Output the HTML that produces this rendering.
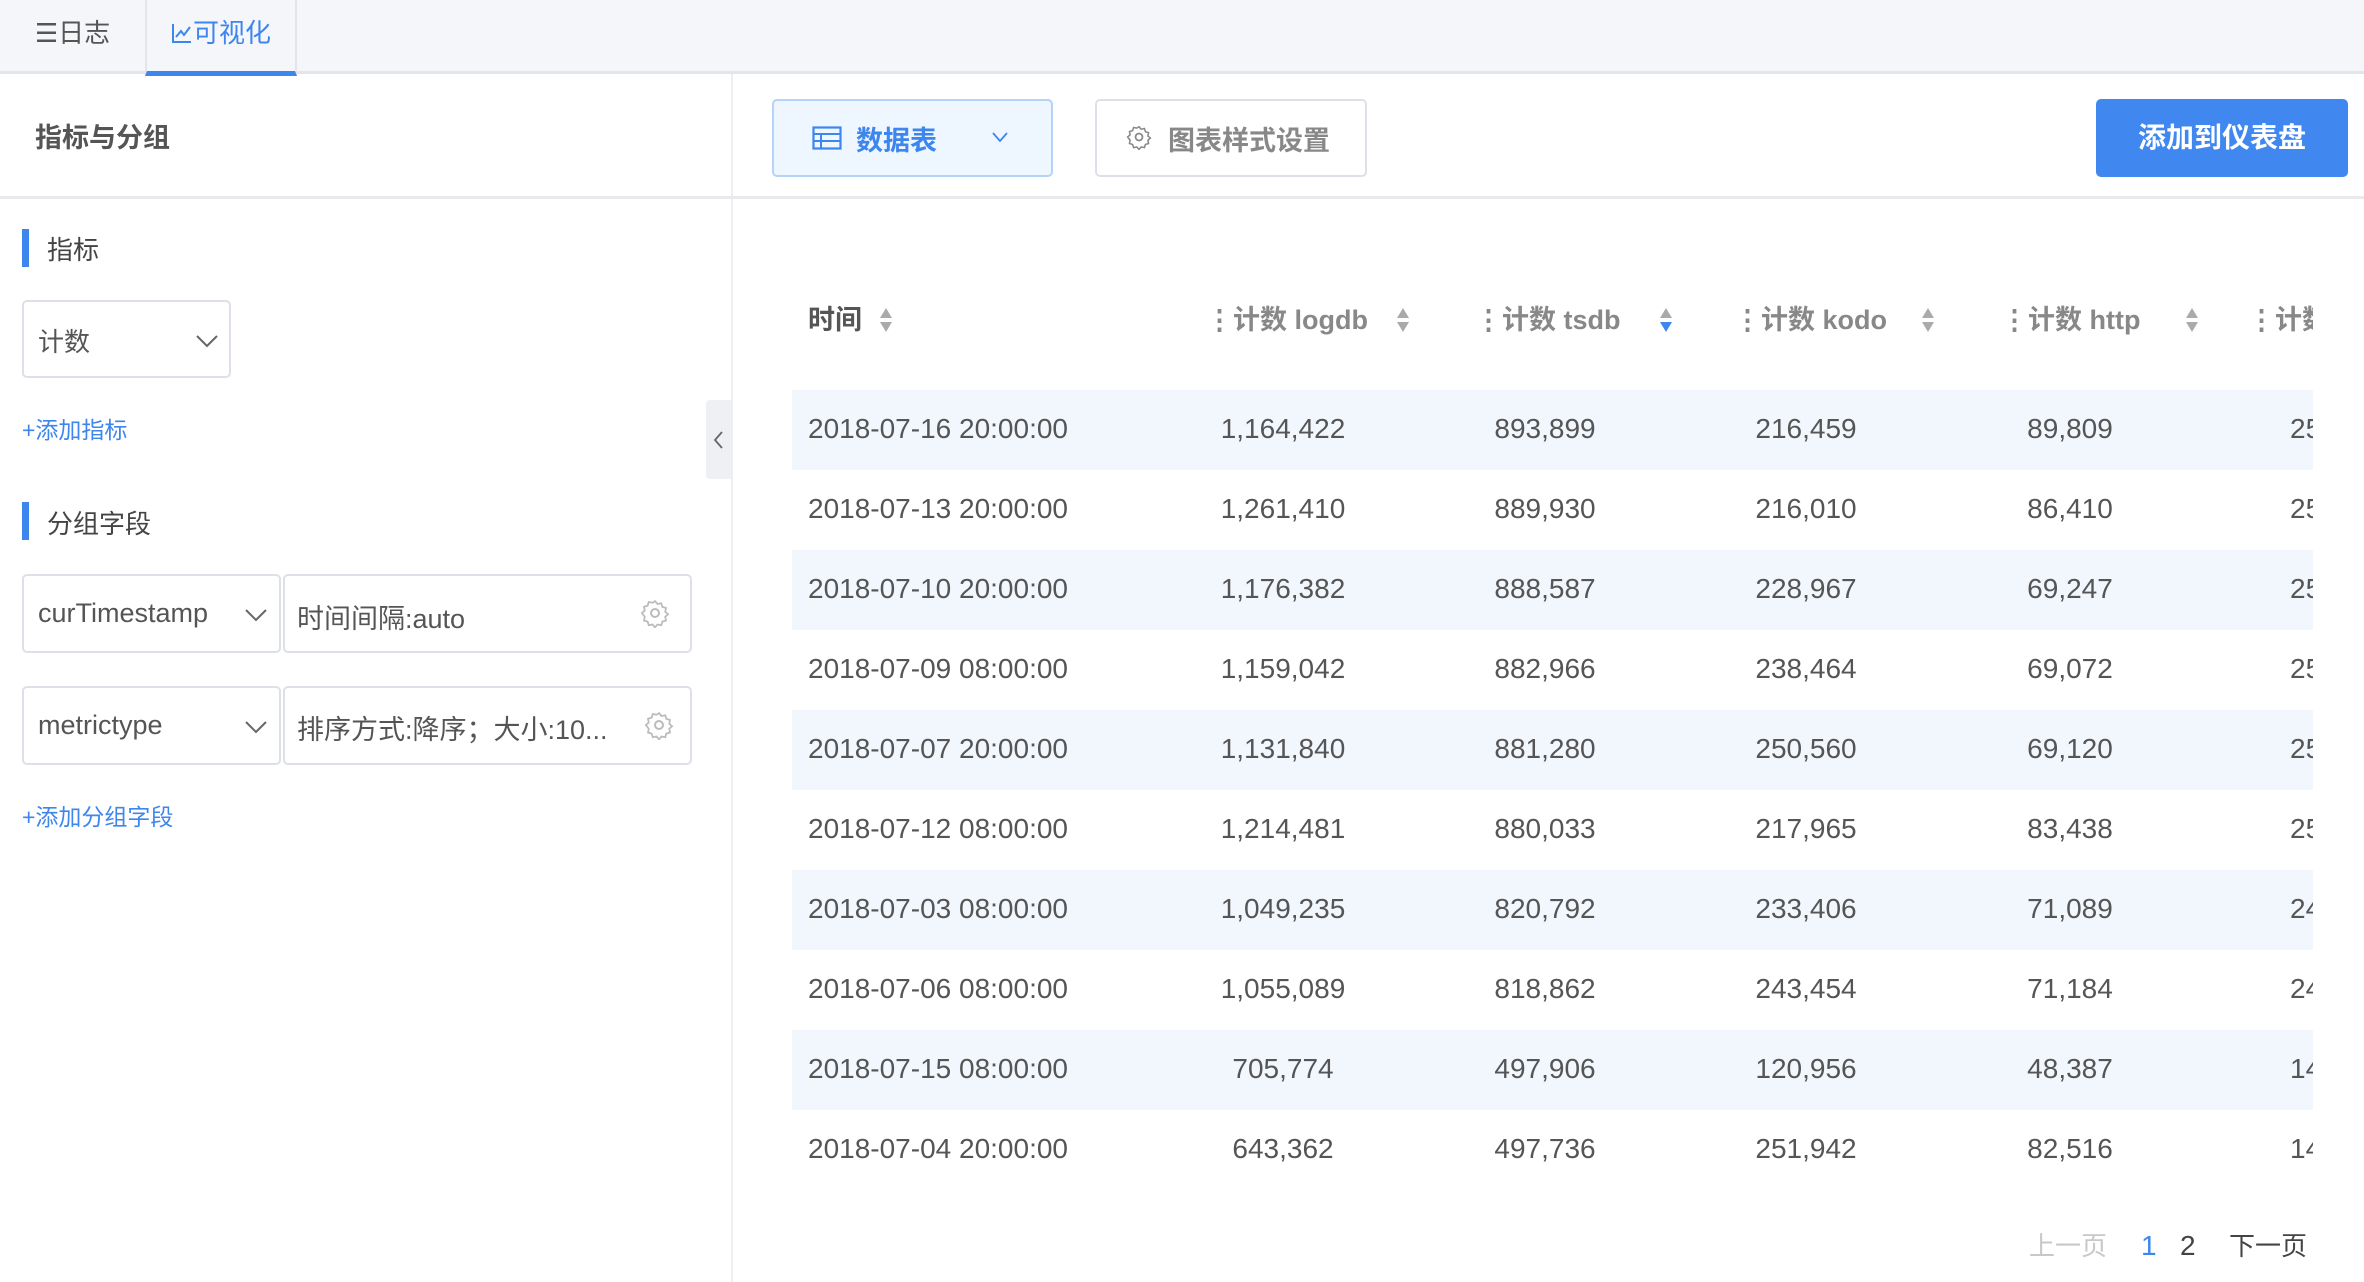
<!DOCTYPE html>
<html><head><meta charset="utf-8"><style>
*{margin:0;padding:0;box-sizing:border-box}
body{width:2364px;height:1282px;position:relative;overflow:hidden;background:#fff;font-family:"Liberation Sans","Noto Sans CJK SC",sans-serif;color:#555}
.a{position:absolute}
.top{left:0;top:0;width:2364px;height:74px;background:#f5f6fa;border-bottom:3px solid #e3e5ea}
.tab{top:0;height:74px;font-size:26px;line-height:66px;text-align:center}
.sel{border:2px solid #dde0e6;border-radius:5px;background:#fff}
.bar{width:7px;background:#3d86ee}
.lbl{font-size:26px;color:#444}
.blue{color:#3d86ee}
.row{left:792px;width:1521px;height:80px;overflow:hidden;font-size:28px;color:#555;line-height:78px}
.row.s{background:#f2f6fd}
.row span{position:absolute;top:0;white-space:nowrap}
.c0{left:16px}
.c1{left:391px;width:200px;text-align:center}
.c2{left:653px;width:200px;text-align:center}
.c3{left:914px;width:200px;text-align:center}
.c4{left:1178px;width:200px;text-align:center}
.c5{left:1498px}
.h{top:298px;font-size:27px;font-weight:bold;color:#888;white-space:nowrap;line-height:44px}
</style></head><body>
<div class="a top"></div>
<div class="a tab" style="left:0;width:145px;color:#555">☰日志</div>
<div class="a tab" style="left:145px;width:152px;color:#3d86ee;border-left:2px solid #e3e5ea;border-right:2px solid #e3e5ea;border-bottom:5px solid #3d86ee;height:76px">
<svg width="22" height="22" viewBox="0 0 22 22" style="vertical-align:-2px"><path d="M2 2V20H20M5 15L10 9L13 13L19 5" fill="none" stroke="#3d86ee" stroke-width="2"/></svg>可视化</div>

<div class="a" style="left:731px;top:74px;width:2px;height:1208px;background:#eceef2"></div>
<div class="a" style="left:0;top:196px;width:2364px;height:3px;background:#e8eaee"></div>
<div class="a" style="left:35px;top:116px;font-size:27px;font-weight:bold;color:#555">指标与分组</div>

<div class="a bar" style="left:22px;top:229px;height:38px"></div>
<div class="a lbl" style="left:47px;top:230px">指标</div>
<div class="a sel" style="left:22px;top:300px;width:209px;height:78px"></div>
<div class="a lbl" style="left:38px;top:322px;color:#555">计数</div>
<svg class="a" style="left:196px;top:334px" width="22" height="14"><path d="M1 2L11 12L21 2" fill="none" stroke="#666" stroke-width="2"/></svg>
<div class="a blue" style="left:22px;top:411px;font-size:23px">+添加指标</div>

<div class="a bar" style="left:22px;top:502px;height:38px"></div>
<div class="a lbl" style="left:47px;top:504px">分组字段</div>

<div class="a sel" style="left:22px;top:574px;width:259px;height:79px"></div>
<div class="a" style="left:38px;top:598px;font-size:27px;color:#555">curTimestamp</div>
<svg class="a" style="left:245px;top:608px" width="22" height="14"><path d="M1 2L11 12L21 2" fill="none" stroke="#666" stroke-width="2"/></svg>
<div class="a sel" style="left:283px;top:574px;width:409px;height:79px"></div>
<div class="a" style="left:297px;top:597px;font-size:27px;color:#555">时间间隔:auto</div>
<svg class="a" style="left:640px;top:598px" width="30" height="30" viewBox="0 0 24 24"><circle cx="12" cy="12" r="3.2" fill="none" stroke="#bbb" stroke-width="1.6"/><path d="M12 2.5l2 2.3 3-.6.9 2.9 2.9.9-.6 3 2.3 2-2.3 2 .6 3-2.9.9-.9 2.9-3-.6-2 2.3-2-2.3-3 .6-.9-2.9-2.9-.9.6-3L1.5 12l2.3-2-.6-3 2.9-.9.9-2.9 3 .6z" fill="none" stroke="#bbb" stroke-width="1.4"/></svg>

<div class="a sel" style="left:22px;top:686px;width:259px;height:79px"></div>
<div class="a" style="left:38px;top:710px;font-size:27px;color:#555">metrictype</div>
<svg class="a" style="left:245px;top:720px" width="22" height="14"><path d="M1 2L11 12L21 2" fill="none" stroke="#666" stroke-width="2"/></svg>
<div class="a sel" style="left:283px;top:686px;width:409px;height:79px"></div>
<div class="a" style="left:297px;top:708px;font-size:27px;color:#555">排序方式:降序；大小:10...</div>
<svg class="a" style="left:644px;top:710px" width="30" height="30" viewBox="0 0 24 24"><circle cx="12" cy="12" r="3.2" fill="none" stroke="#bbb" stroke-width="1.6"/><path d="M12 2.5l2 2.3 3-.6.9 2.9 2.9.9-.6 3 2.3 2-2.3 2 .6 3-2.9.9-.9 2.9-3-.6-2 2.3-2-2.3-3 .6-.9-2.9-2.9-.9.6-3L1.5 12l2.3-2-.6-3 2.9-.9.9-2.9 3 .6z" fill="none" stroke="#bbb" stroke-width="1.4"/></svg>
<div class="a blue" style="left:22px;top:798px;font-size:23px">+添加分组字段</div>

<div class="a" style="left:706px;top:400px;width:25px;height:79px;background:#eef0f4;border-radius:4px 0 0 4px"></div>
<svg class="a" style="left:712px;top:430px" width="12" height="20"><path d="M10 2L3 10L10 18" fill="none" stroke="#666" stroke-width="1.8"/></svg>

<div class="a" style="left:772px;top:99px;width:281px;height:78px;background:#eef6ff;border:2px solid #b5d3f6;border-radius:5px"></div>
<svg class="a" style="left:812px;top:126px" width="30" height="24"><rect x="1.5" y="1.5" width="27" height="21" fill="none" stroke="#3d86ee" stroke-width="2.2"/><path d="M1.5 8H28.5M1.5 15H28.5M9 8V22.5" stroke="#3d86ee" stroke-width="2"/></svg>
<div class="a" style="left:856px;top:119px;font-size:27px;font-weight:bold;color:#3d86ee">数据表</div>
<svg class="a" style="left:992px;top:132px" width="16" height="11"><path d="M1 1L8 9L15 1" fill="none" stroke="#3d86ee" stroke-width="1.8"/></svg>

<div class="a" style="left:1095px;top:99px;width:272px;height:78px;border:2px solid #dde0e6;border-radius:5px"></div>
<svg class="a" style="left:1126px;top:124px" width="26" height="26" viewBox="0 0 24 24"><circle cx="12" cy="12" r="3.2" fill="none" stroke="#888" stroke-width="1.6"/><path d="M12 2.5l2 2.3 3-.6.9 2.9 2.9.9-.6 3 2.3 2-2.3 2 .6 3-2.9.9-.9 2.9-3-.6-2 2.3-2-2.3-3 .6-.9-2.9-2.9-.9.6-3L1.5 12l2.3-2-.6-3 2.9-.9.9-2.9 3 .6z" fill="none" stroke="#888" stroke-width="1.4"/></svg>
<div class="a" style="left:1168px;top:119px;font-size:27px;font-weight:bold;color:#888">图表样式设置</div>

<div class="a" style="left:2096px;top:99px;width:252px;height:78px;background:#4088f0;border-radius:5px;color:#fff;font-size:28px;font-weight:bold;text-align:center;line-height:78px">添加到仪表盘</div>

<div class="a h" style="left:808px;color:#555">时间</div>
<svg class="a" style="left:878px;top:307px" width="16" height="26"><path d="M8 1L14 11H2z" fill="#aaa"/><path d="M8 25L14 15H2z" fill="#aaa"/></svg>
<div class="a h" style="left:1206px">⋮计数 logdb</div>
<svg class="a" style="left:1395px;top:307px" width="16" height="26"><path d="M8 1L14 11H2z" fill="#aaa"/><path d="M8 25L14 15H2z" fill="#aaa"/></svg>
<div class="a h" style="left:1475px">⋮计数 tsdb</div>
<svg class="a" style="left:1658px;top:307px" width="16" height="26"><path d="M8 1L14 11H2z" fill="#aaa"/><path d="M8 25L14 15H2z" fill="#3d86ee"/></svg>
<div class="a h" style="left:1734px">⋮计数 kodo</div>
<svg class="a" style="left:1920px;top:307px" width="16" height="26"><path d="M8 1L14 11H2z" fill="#aaa"/><path d="M8 25L14 15H2z" fill="#aaa"/></svg>
<div class="a h" style="left:2001px">⋮计数 http</div>
<svg class="a" style="left:2184px;top:307px" width="16" height="26"><path d="M8 1L14 11H2z" fill="#aaa"/><path d="M8 25L14 15H2z" fill="#aaa"/></svg>
<div class="a" style="left:2248px;top:298px;width:65px;overflow:hidden;height:44px"><div class="h" style="position:absolute;left:0;top:0">⋮计数 other</div></div>

<div class="a row s" style="top:390px"><span class="c0">2018-07-16 20:00:00</span><span class="c1">1,164,422</span><span class="c2">893,899</span><span class="c3">216,459</span><span class="c4">89,809</span><span class="c5">25,123</span></div>
<div class="a row" style="top:470px"><span class="c0">2018-07-13 20:00:00</span><span class="c1">1,261,410</span><span class="c2">889,930</span><span class="c3">216,010</span><span class="c4">86,410</span><span class="c5">25,123</span></div>
<div class="a row s" style="top:550px"><span class="c0">2018-07-10 20:00:00</span><span class="c1">1,176,382</span><span class="c2">888,587</span><span class="c3">228,967</span><span class="c4">69,247</span><span class="c5">25,123</span></div>
<div class="a row" style="top:630px"><span class="c0">2018-07-09 08:00:00</span><span class="c1">1,159,042</span><span class="c2">882,966</span><span class="c3">238,464</span><span class="c4">69,072</span><span class="c5">25,123</span></div>
<div class="a row s" style="top:710px"><span class="c0">2018-07-07 20:00:00</span><span class="c1">1,131,840</span><span class="c2">881,280</span><span class="c3">250,560</span><span class="c4">69,120</span><span class="c5">25,123</span></div>
<div class="a row" style="top:790px"><span class="c0">2018-07-12 08:00:00</span><span class="c1">1,214,481</span><span class="c2">880,033</span><span class="c3">217,965</span><span class="c4">83,438</span><span class="c5">25,123</span></div>
<div class="a row s" style="top:870px"><span class="c0">2018-07-03 08:00:00</span><span class="c1">1,049,235</span><span class="c2">820,792</span><span class="c3">233,406</span><span class="c4">71,089</span><span class="c5">24,123</span></div>
<div class="a row" style="top:950px"><span class="c0">2018-07-06 08:00:00</span><span class="c1">1,055,089</span><span class="c2">818,862</span><span class="c3">243,454</span><span class="c4">71,184</span><span class="c5">24,123</span></div>
<div class="a row s" style="top:1030px"><span class="c0">2018-07-15 08:00:00</span><span class="c1">705,774</span><span class="c2">497,906</span><span class="c3">120,956</span><span class="c4">48,387</span><span class="c5">14,123</span></div>
<div class="a row" style="top:1110px"><span class="c0">2018-07-04 20:00:00</span><span class="c1">643,362</span><span class="c2">497,736</span><span class="c3">251,942</span><span class="c4">82,516</span><span class="c5">14,123</span></div>

<div class="a" style="left:2029px;top:1226px;font-size:26px;color:#c8c8c8">上一页</div>
<div class="a" style="left:2141px;top:1230px;font-size:28px;color:#3d86ee">1</div>
<div class="a" style="left:2180px;top:1230px;font-size:28px;color:#444">2</div>
<div class="a" style="left:2229px;top:1226px;font-size:26px;color:#444">下一页</div>
</body></html>
